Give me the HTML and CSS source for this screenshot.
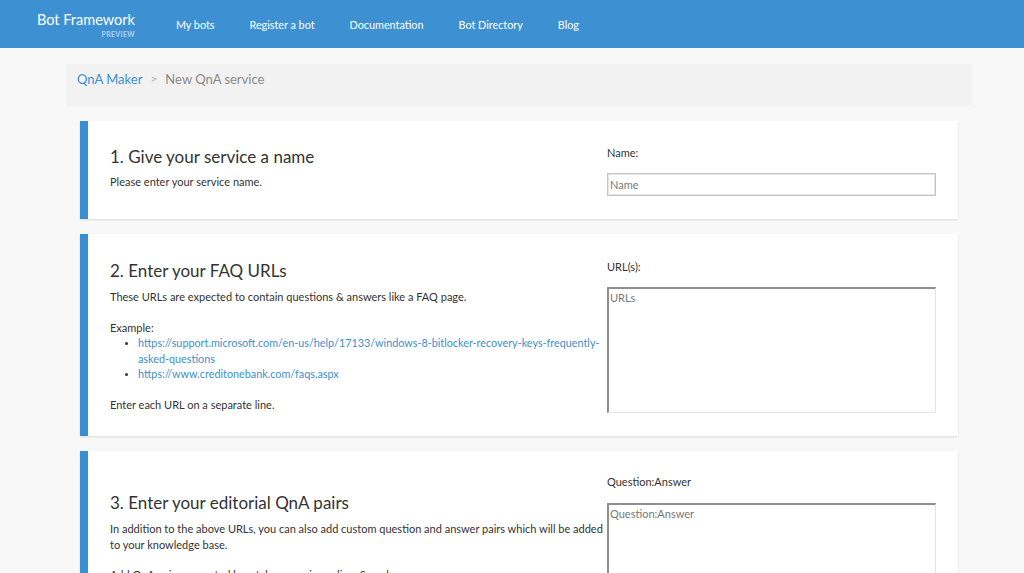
FILE: index.html
```html
<!DOCTYPE html>
<html>
<head>
<meta charset="utf-8">
<link rel="stylesheet" href="styles.css">
</head>
<body>
<header class="topbar">
  <div class="brand">
    <span class="brand-name">Bot Framework</span>
    <span class="brand-tag">PREVIEW</span>
  </div>
  <nav class="nav">
    <a href="#">My bots</a>
    <a href="#">Register a bot</a>
    <a href="#">Documentation</a>
    <a href="#">Bot Directory</a>
    <a href="#">Blog</a>
  </nav>
</header>
<main class="page">
  <div class="crumbs">
    <a href="#" class="crumb-link">QnA Maker</a>
    <span class="crumb-sep">&gt;</span>
    <span class="crumb-current">New QnA service</span>
  </div>
  <section class="card card-1">
    <div class="card-left">
      <h2>1. Give your service a name</h2>
      <p>Please enter your service name.</p>
    </div>
    <div class="card-right">
      <label class="field-label">Name:</label>
      <input class="text-input" type="text" placeholder="Name">
    </div>
  </section>
  <section class="card card-2">
    <div class="card-left">
      <h2>2. Enter your FAQ URLs</h2>
      <p>These URLs are expected to contain questions &amp; answers like a FAQ page.</p>
      <p class="gap">Example:</p>
      <ul class="examples">
        <li><a href="#">https://support.microsoft.com/en-us/help/17133/windows-8-bitlocker-recovery-keys-frequently-asked-questions</a></li>
        <li><a href="#">https://www.creditonebank.com/faqs.aspx</a></li>
      </ul>
      <p class="gap">Enter each URL on a separate line.</p>
    </div>
    <div class="card-right">
      <label class="field-label">URL(s):</label>
      <textarea class="text-area urls" placeholder="URLs"></textarea>
    </div>
  </section>
  <section class="card card-3">
    <div class="card-left">
      <h2>3. Enter your editorial QnA pairs</h2>
      <p>In addition to the above URLs, you can also add custom question and answer pairs which will be added to your knowledge base.</p>
      <p class="gap">Add QnA pairs separated by a tab, one pair per line. Sample:</p>
    </div>
    <div class="card-right">
      <label class="field-label">Question:Answer</label>
      <textarea class="text-area qna" placeholder="Question:Answer"></textarea>
    </div>
  </section>
</main>
</body>
</html>
```
FILE: styles.css
```css
html, body {
  margin: 0;
  padding: 0;
}
body {
  background: #f8f8f8;
  font-family: Lato, "Noto Sans", sans-serif;
  color: #333;
  font-size: 11px;
  overflow: hidden;
  height: 573px;
}
a { text-decoration: none; }

.topbar {
  height: 48px;
  background: #3d91d3;
  display: flex;
  align-items: center;
  padding-left: 37px;
}
.brand {
  display: flex;
  flex-direction: column;
  align-items: flex-end;
  margin-top: 2px;
}
.brand-name {
  color: #fff;
  font-size: 14.5px;
  line-height: 18px;
}
.brand-tag {
  color: rgba(255,255,255,0.6);
  font-size: 7px;
  font-weight: bold;
  letter-spacing: 0.3px;
  line-height: 10px;
}
.nav {
  display: flex;
  gap: 35px;
  margin-left: 41px;
}
.nav a {
  color: #fff;
  font-size: 10.8px;
}

.page {
  margin-left: 66px;
  width: 906px;
  padding-top: 16px;
}
.crumbs {
  background: #f2f2f2;
  height: 42px;
  box-sizing: border-box;
  display: flex;
  align-items: flex-start;
  padding: 7px 0 0 11px;
  font-size: 13px;
  line-height: 16px;
  margin-bottom: 15px;
}
.crumb-link { color: #3c8fd0; }
.crumb-sep { color: #b5b5b5; margin: 0 8px; font-size: 12px; }
.crumb-current { color: #8a8a8a; }

.card {
  margin: 0 14px 15px;
  background: #fff;
  border-left: 8px solid #3a8fd3;
  box-shadow: 0 1px 2px rgba(0,0,0,0.12);
  display: grid;
  grid-template-columns: 496px 329px;
  column-gap: 1px;
  padding: 0 22px;
}
.card-left h2 {
  font-weight: normal;
  font-size: 17px;
  line-height: 22px;
  margin: 0 0 7px;
  color: #333;
}
.card-left p {
  margin: 0;
  line-height: 15.5px;
}
.card-left p.gap { margin-top: 15px; }
.examples {
  margin: 0;
  padding-left: 28px;
  line-height: 15.5px;
}
.examples li::marker { font-size: 9px; }
.examples a { color: #3c8fd0; font-size: 10.8px; }

.card-1 { height: 98px; }
.card-1 .card-left { padding-top: 25px; }
.card-1 .card-right { padding-top: 24px; }
.card-1 .card-left h2 { margin-bottom: 6px; }

.card-2 { height: 202px; }
.card-2 .card-left { padding-top: 26px; }
.card-2 .card-right { padding-top: 25px; }

.card-3 { height: 260px; }
.card-3 .card-left { padding-top: 41px; }
.card-3 .card-right { padding-top: 23px; }
.card-3 .field-label { margin-bottom: 13px; }

.field-label {
  display: block;
  font-size: 11px;
  line-height: 16px;
  margin-bottom: 12px;
}
.text-input {
  box-sizing: border-box;
  width: 329px;
  height: 23px;
  border: 1px solid #c4c4c4;
  box-shadow: inset 0 0 0 1px #e4e4e4;
  padding: 0 2px;
  font-family: inherit;
  font-size: 11px;
  outline: none;
}
.text-area {
  display: block;
  box-sizing: border-box;
  width: 329px;
  border: 1px solid;
  border-width: 2px 1px 1px 2px;
  border-color: #8f8f8f #e3e3e3 #e3e3e3 #8f8f8f;
  padding: 1px 1px;
  font-family: inherit;
  font-size: 11px;
  line-height: 15px;
  resize: none;
  outline: none;
}
.text-input::placeholder, .text-area::placeholder { color: #777; }
.urls { height: 126px; }
.qna { height: 200px; }
```
